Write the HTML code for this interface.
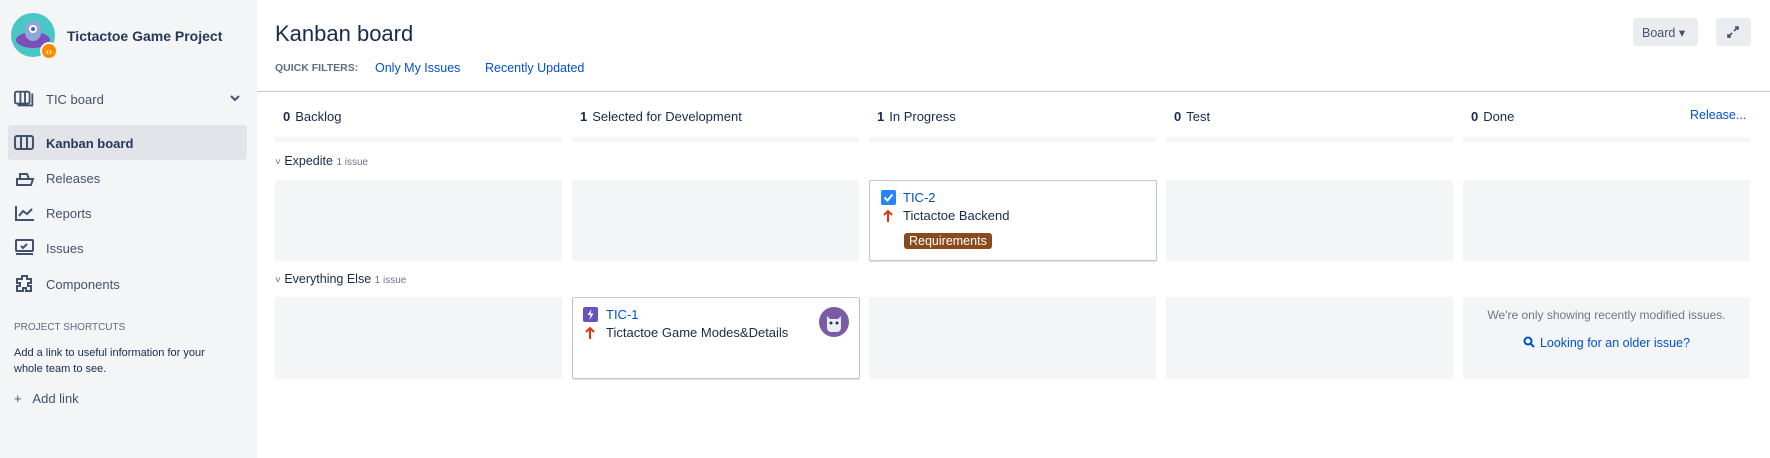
<!DOCTYPE html>
<html><head><meta charset="utf-8"><style>
*{box-sizing:border-box;margin:0;padding:0}
body{width:1770px;height:458px;overflow:hidden;font-family:"Liberation Sans",sans-serif;color:#172b4d;background:#fff;position:relative;font-size:14px}
.abs{position:absolute}
#side{left:0;top:0;width:257px;height:458px;background:#f4f5f7}
.nav{position:absolute;left:14px;font-size:13px;color:#42526e;display:flex;align-items:center}
.nav svg{margin-right:10px}
.col{position:absolute;width:287px;background:#f4f5f7}
.hd{position:absolute;top:109px;font-size:13px;color:#172b4d}
.hd b{margin-right:5px}
.card{position:absolute;background:#fff;border:1px solid #c1c7d0;border-radius:2px;box-shadow:0 1px 1px rgba(9,30,66,.15)}
a{color:#0052cc;text-decoration:none}
</style></head><body>
<div id="side" class="abs">
 <svg class="abs" style="left:11px;top:13px" width="48" height="50" viewBox="0 0 48 50">
  <circle cx="22" cy="22" r="22" fill="#4bc6c6"/>
  <ellipse cx="22" cy="27" rx="17" ry="8" fill="#7b4fb7"/>
  <rect x="14" y="8" width="16" height="20" rx="8" fill="#8fa8d8"/>
  <circle cx="22" cy="16" r="4" fill="#fff"/><circle cx="22" cy="16" r="2" fill="#3a68b8"/>
  <circle cx="38" cy="38" r="8" fill="#ff8b00" stroke="#f4f5f7" stroke-width="2"/>
  <text x="38" y="41.5" font-size="9" fill="#fff" text-anchor="middle" font-family="Liberation Sans" font-weight="bold">‹›</text>
 </svg>
 <div class="abs" style="left:67px;top:28px;font-size:14px;font-weight:bold;color:#253858">Tictactoe Game Project</div>
 <div class="nav" style="top:89px"><svg width="22" height="20" viewBox="0 0 24 20" fill="none" stroke="#42526e" stroke-width="2"><rect x="1" y="2" width="16" height="13" rx="2"/><path d="M7 2v13M12 2v13M20 4v13H4"/></svg>TIC board</div>
 <svg class="abs" style="left:230px;top:94px" width="10" height="8" viewBox="0 0 10 8"><path d="M1 2l4 4 4-4" stroke="#42526e" stroke-width="2" fill="none"/></svg>
 <div class="abs" style="left:8px;top:125px;width:239px;height:35px;background:#e2e4e9;border-radius:3px"></div>
 <div class="nav" style="top:134px;font-weight:bold;color:#253858"><svg width="22" height="18" viewBox="0 0 22 18" fill="none" stroke="#42526e" stroke-width="2"><rect x="1" y="2" width="18" height="13" rx="2"/><path d="M7 2v13M13 2v13"/></svg>Kanban board</div>
 <div class="nav" style="top:169px"><svg width="22" height="18" viewBox="0 0 22 18" fill="none" stroke="#42526e" stroke-width="2"><path d="M3 10h16l-2 6H3z M6 10V5h7l2 5"/></svg>Releases</div>
 <div class="nav" style="top:204px"><svg width="22" height="18" viewBox="0 0 22 18" fill="none" stroke="#42526e" stroke-width="2"><path d="M2 2v14h18M5 12l4-5 4 3 5-5"/></svg>Reports</div>
 <div class="nav" style="top:239px"><svg width="22" height="18" viewBox="0 0 22 18" fill="none" stroke="#42526e" stroke-width="2"><rect x="2" y="1" width="17" height="11" rx="1"/><path d="M7 7l2 2 4-4M2 15h17"/></svg>Issues</div>
 <div class="nav" style="top:274px"><svg width="22" height="20" viewBox="0 0 22 20" fill="none" stroke="#42526e" stroke-width="2"><path d="M8 2h5v3h4v4h-3v3h3v5h-5v-3H9v3H3v-5h3V9H3V5h5z"/></svg>Components</div>
 <div class="abs" style="left:14px;top:322px;font-size:10px;color:#5e6c84">PROJECT SHORTCUTS</div>
 <div class="abs" style="left:14px;top:345px;font-size:11px;line-height:16px;color:#172b4d">Add a link to useful information for your<br>whole team to see.</div>
 <div class="abs" style="left:14px;top:391px;font-size:13px;color:#42526e">+&nbsp;&nbsp;&nbsp;Add link</div>
</div>

<div class="abs" style="left:275px;top:21px;font-size:22px;color:#172b4d">Kanban board</div>
<div class="abs" style="left:275px;top:62px;font-size:10.5px;color:#5e6c84;font-weight:bold">QUICK FILTERS:</div>
<a class="abs" style="left:375px;top:61px;font-size:12.5px">Only My Issues</a>
<a class="abs" style="left:485px;top:61px;font-size:12.5px">Recently Updated</a>
<div class="abs" style="left:1633px;top:18px;width:65px;height:28px;background:#ebecf0;border-radius:3px;font-size:12.5px;color:#42526e;padding:7px 0 0 9px">Board ▾</div>
<div class="abs" style="left:1716px;top:18px;width:35px;height:28px;background:#ebecf0;border-radius:3px"><svg style="margin:7px 0 0 10px" width="14" height="14" viewBox="0 0 14 14" fill="none" stroke="#42526e" stroke-width="1.6"><path d="M8 6l4-4M9 2h3v3M6 8l-4 4M2 9v3h3"/></svg></div>
<div class="abs" style="left:257px;top:91px;width:1513px;height:1px;background:#c1c7d0"></div>

<div class="hd" style="left:283px"><b>0</b>Backlog</div>
<div class="hd" style="left:580px"><b>1</b>Selected for Development</div>
<div class="hd" style="left:877px"><b>1</b>In Progress</div>
<div class="hd" style="left:1174px"><b>0</b>Test</div>
<div class="hd" style="left:1471px"><b>0</b>Done</div>
<a class="abs" style="left:1690px;top:108px;font-size:12.5px">Release...</a>

<div class="col" style="left:275px;top:137px;height:5px"></div>
<div class="col" style="left:572px;top:137px;height:5px"></div>
<div class="col" style="left:869px;top:137px;height:5px"></div>
<div class="col" style="left:1166px;top:137px;height:5px"></div>
<div class="col" style="left:1463px;top:137px;height:5px"></div>

<div class="abs" style="left:275px;top:154px;font-size:12.5px;color:#172b4d"><span style="font-size:10px;color:#5e6c84">˅</span> Expedite <span style="font-size:10px;color:#6b778c">1 issue</span></div>
<div class="col" style="left:275px;top:180px;height:81px"></div>
<div class="col" style="left:572px;top:180px;height:81px"></div>
<div class="col" style="left:1166px;top:180px;height:81px"></div>
<div class="col" style="left:1463px;top:180px;height:81px"></div>
<div class="card" style="left:869px;top:180px;width:288px;height:81px">
 <svg class="abs" style="left:11px;top:9px" width="15" height="15" viewBox="0 0 15 15"><rect width="15" height="15" rx="2" fill="#2684ff"/><path d="M3.5 7.5l3 3 5-6" stroke="#fff" stroke-width="2" fill="none"/></svg>
 <a class="abs" style="left:33px;top:9px;font-size:13px">TIC-2</a>
 <svg class="abs" style="left:12px;top:28px" width="12" height="14" viewBox="0 0 12 14"><path d="M6 13V2M2 6l4-4 4 4" stroke="#de350b" stroke-width="2" fill="none"/></svg>
 <div class="abs" style="left:33px;top:27px;font-size:13px">Tictactoe Backend</div>
 <div class="abs" style="left:34px;top:52px;background:#8b4a1e;color:#fff;font-size:12.5px;padding:1px 5px;border-radius:3px">Requirements</div>
</div>

<div class="abs" style="left:275px;top:272px;font-size:12.5px;color:#172b4d"><span style="font-size:10px;color:#5e6c84">˅</span> Everything Else <span style="font-size:10px;color:#6b778c">1 issue</span></div>
<div class="col" style="left:275px;top:297px;height:82px"></div>
<div class="col" style="left:869px;top:297px;height:82px"></div>
<div class="col" style="left:1166px;top:297px;height:82px"></div>
<div class="col" style="left:1463px;top:297px;height:82px"></div>
<div class="card" style="left:572px;top:297px;width:288px;height:82px">
 <svg class="abs" style="left:10px;top:9px" width="15" height="15" viewBox="0 0 15 15"><rect width="15" height="15" rx="2" fill="#6554c0"/><path d="M8.5 2L4.5 8h3l-1 5 4-6.5h-3z" fill="#fff"/></svg>
 <a class="abs" style="left:33px;top:9px;font-size:13px">TIC-1</a>
 <svg class="abs" style="left:11px;top:28px" width="12" height="14" viewBox="0 0 12 14"><path d="M6 13V2M2 6l4-4 4 4" stroke="#de350b" stroke-width="2" fill="none"/></svg>
 <div class="abs" style="left:33px;top:27px;font-size:13px">Tictactoe Game Modes&amp;Details</div>
 <svg class="abs" style="left:246px;top:9px" width="30" height="30" viewBox="0 0 30 30"><circle cx="15" cy="15" r="15" fill="#7b5aa6"/><path d="M8 9l3 3h8l3-3v12a4 4 0 0 1-4 4h-6a4 4 0 0 1-4-4z" fill="#e8eef8"/><circle cx="12" cy="16" r="1.5" fill="#333"/><circle cx="18" cy="16" r="1.5" fill="#333"/></svg>
</div>
<div class="abs" style="left:1463px;top:308px;width:287px;text-align:center;font-size:12px;color:#6b778c">We're only showing recently modified issues.</div>
<div class="abs" style="left:1463px;top:336px;width:287px;text-align:center;font-size:12.5px;color:#0052cc"><svg width="12" height="12" viewBox="0 0 12 12" style="vertical-align:-1px;margin-right:5px"><circle cx="5" cy="5" r="3.5" stroke="#0052cc" stroke-width="2" fill="none"/><path d="M7.5 7.5L11 11" stroke="#0052cc" stroke-width="2"/></svg>Looking for an older issue?</div>
</body></html>
